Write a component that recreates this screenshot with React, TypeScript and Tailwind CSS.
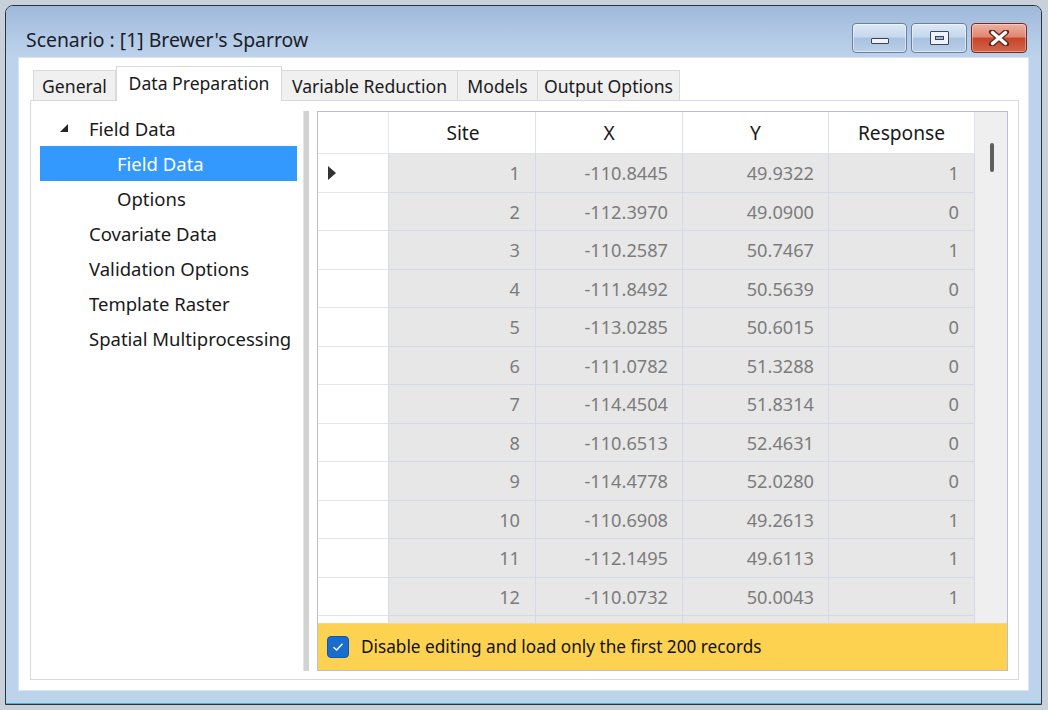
import React from "react";

const rows: [number, string, string, number][] = [
  [1, "-110.8445", "49.9322", 1],
  [2, "-112.3970", "49.0900", 0],
  [3, "-110.2587", "50.7467", 1],
  [4, "-111.8492", "50.5639", 0],
  [5, "-113.0285", "50.6015", 0],
  [6, "-111.0782", "51.3288", 0],
  [7, "-114.4504", "51.8314", 0],
  [8, "-110.6513", "52.4631", 0],
  [9, "-114.4778", "52.0280", 0],
  [10, "-110.6908", "49.2613", 1],
  [11, "-112.1495", "49.6113", 1],
  [12, "-110.0732", "50.0043", 1],
  [13, "", "", 0],
];

function TitleButtons() {
  return (
    <div className="flex gap-[4px] mt-[17px]">
      <div className="w-[55px] h-[30px] rounded-[4px] border border-[#6b80a0] bg-[linear-gradient(to_bottom,#dce8f6_0%,#c6d8ee_45%,#a9c2e0_52%,#b9cfe8_100%)] flex items-end justify-center pb-[8px] shadow-[inset_0_0_0_1px_rgba(255,255,255,0.5)]">
        <div className="w-[18px] h-[6px] rounded-[1px] border border-[#3b4757] bg-[#eef3f9]" />
      </div>
      <div className="w-[56px] h-[30px] rounded-[4px] border border-[#6b80a0] bg-[linear-gradient(to_bottom,#dce8f6_0%,#c6d8ee_45%,#a9c2e0_52%,#b9cfe8_100%)] flex items-center justify-center shadow-[inset_0_0_0_1px_rgba(255,255,255,0.5)]">
        <div className="w-[19px] h-[14px] rounded-[1px] border border-[#3b4757] bg-[#eef3f9] flex items-center justify-center">
          <div className="w-[9px] h-[4px] border border-[#3b4757] bg-[#9fb6d3]" />
        </div>
      </div>
      <div className="w-[56px] h-[30px] rounded-[4px] border border-[#7a2a20] bg-[linear-gradient(to_bottom,#eeb1a3_0%,#e0876f_45%,#c7452b_52%,#d4664a_100%)] flex items-center justify-center shadow-[inset_0_0_0_1px_rgba(255,255,255,0.35)]">
        <svg width="22" height="16" viewBox="0 0 22 16">
          <path d="M4 2 L18 14 M18 2 L4 14" stroke="#5a2a22" strokeWidth="6" strokeLinecap="round" />
          <path d="M4.5 2.5 L17.5 13.5 M17.5 2.5 L4.5 13.5" stroke="#ffffff" strokeWidth="3.4" strokeLinecap="round" />
        </svg>
      </div>
    </div>
  );
}

function Tabs() {
  return (
    <div className="h-[34px] shrink-0 flex items-end ml-[3px] text-[17.6px]">
      <div className="w-[83px] h-[30px] bg-[#f0f0f0] border border-b-0 border-[#d9d9d9] flex items-center justify-center text-[#1a1a1a]">
        General
      </div>
      <div className="relative z-10 w-[166px] h-[35px] -mb-px bg-white border border-b-0 border-[#d9d9d9] flex items-center justify-center pb-[3px] text-[#1a1a1a]">
        Data Preparation
      </div>
      <div className="w-[176px] h-[30px] bg-[#f0f0f0] border border-b-0 border-l-0 border-[#d9d9d9] flex items-center justify-center text-[#1a1a1a]">
        Variable Reduction
      </div>
      <div className="w-[80px] h-[30px] bg-[#f0f0f0] border border-b-0 border-l-0 border-[#d9d9d9] flex items-center justify-center text-[#1a1a1a]">
        Models
      </div>
      <div className="w-[142px] h-[30px] bg-[#f0f0f0] border border-b-0 border-l-0 border-[#d9d9d9] flex items-center justify-center text-[#1a1a1a]">
        Output Options
      </div>
    </div>
  );
}

function Tree() {
  return (
    <div className="w-[264px] shrink-0 pl-[1px] pr-[6px] flex flex-col text-[#1a1a1a] text-[18.5px]">
      <div className="h-[35px] flex items-center">
        <div className="w-[20px]" />
        <svg width="8" height="8" viewBox="0 0 8 8" className="mt-[-1px]">
          <polygon points="8,0 8,8 0,8" fill="#262626" />
        </svg>
        <span className="ml-[21px]">Field Data</span>
      </div>
      <div className="h-[35px] flex items-center bg-[#3399ff] text-white pl-[77px]">Field Data</div>
      <div className="h-[35px] flex items-center pl-[77px]">Options</div>
      <div className="h-[35px] flex items-center pl-[49px]">Covariate Data</div>
      <div className="h-[35px] flex items-center pl-[49px]">Validation Options</div>
      <div className="h-[35px] flex items-center pl-[49px]">Template Raster</div>
      <div className="h-[35px] flex items-center pl-[49px]">Spatial Multiprocessing</div>
    </div>
  );
}

function Grid() {
  return (
    <div className="flex-1 flex flex-col border border-[#bcbcd6] bg-white min-w-0 min-h-0">
      <div className="flex-1 flex overflow-hidden min-h-0">
        <div className="w-[657px] shrink-0 flex flex-col">
          <div className="h-[42px] flex shrink-0 text-[#1a1a1a] text-[19.2px]">
            <div className="w-[71px] border-r border-b border-[#e2e6ee]" />
            <div className="w-[147px] border-r border-b border-[#dde2ec] flex items-center justify-center pl-[2px]">Site</div>
            <div className="w-[147px] border-r border-b border-[#dde2ec] flex items-center justify-center">X</div>
            <div className="w-[146px] border-r border-b border-[#dde2ec] flex items-center justify-center">Y</div>
            <div className="w-[146px] border-r border-b border-[#dde2ec] flex items-center justify-center">Response</div>
          </div>
          {rows.map((r, i) => (
            <div key={i} className={`flex shrink-0 text-[18.2px] ${i % 2 === 0 ? "h-[39px]" : "h-[38px]"}`}>
              <div className="w-[71px] bg-white border-r border-r-[#d5dbe8] border-b border-b-[#e4e4e4] flex items-center pl-[10px]">
                {i === 0 && (
                  <svg width="8" height="14" viewBox="0 0 8 14">
                    <polygon points="0,0 8,7 0,14" fill="#333333" />
                  </svg>
                )}
              </div>
              <div className="w-[147px] bg-[#e7e7e7] border-r border-b border-[#d3d9e6] flex items-center justify-end pr-[15px] text-[#7c7c7c]">
                {r[1] ? r[0] : ""}
              </div>
              <div className="w-[147px] bg-[#e7e7e7] border-r border-b border-[#d3d9e6] flex items-center justify-end pr-[14px] text-[#7c7c7c]">
                {r[1]}
              </div>
              <div className="w-[146px] bg-[#e7e7e7] border-r border-b border-[#d3d9e6] flex items-center justify-end pr-[14px] text-[#7c7c7c]">
                {r[2]}
              </div>
              <div className="w-[146px] bg-[#e7e7e7] border-r border-b border-[#d3d9e6] flex items-center justify-end pr-[15px] text-[#7c7c7c]">
                {r[1] ? r[3] : ""}
              </div>
            </div>
          ))}
        </div>
        <div className="flex-1 bg-[#efefef] flex justify-center pt-[31px] pl-[1px]">
          <div className="w-[4px] h-[29px] rounded-[2px] bg-[#5f5f5f]" />
        </div>
      </div>
      <div className="h-[47px] shrink-0 bg-[#fdd250] border-t border-[#e9d9a6] flex items-center pl-[9px] text-[#111111] text-[17.2px]">
        <div className="w-[22px] h-[22px] rounded-[4px] bg-[#1a6dd0] border border-[#0f58b0] flex items-center justify-center">
          <svg width="12" height="10" viewBox="0 0 12 10">
            <path d="M1.5 5.2 L4.6 8 L10.5 1.8" stroke="white" strokeWidth="1.4" fill="none" />
          </svg>
        </div>
        <span className="ml-[12px]">Disable editing and load only the first 200 records</span>
      </div>
    </div>
  );
}

export default function App() {
  return (
    <div className="w-[1048px] h-[710px] bg-[#c8d0da] pt-[5px] pl-[5px] overflow-hidden font-['Segoe_UI','Noto_Sans',sans-serif] text-[17px] leading-[24px]">
      <div className="w-[1037px] h-[700px] border border-[#2b3540] rounded-t-[8px] bg-[#bdd3eb] flex flex-col overflow-hidden">
        <div className="h-[52px] shrink-0 flex justify-between pl-[20px] pr-[14px] bg-[linear-gradient(to_bottom,#9fb9d9_0%,#b3cae6_60%,#bdd3eb_100%)]">
          <div className="mt-[22px] text-[#1c1c2a] text-[19.4px]">Scenario : [1] Brewer's Sparrow</div>
          <TitleButtons />
        </div>
        <div className="flex-1 min-h-0 flex px-[13px] pb-[13px] border-b border-[#3fb6cc]">
          <div className="flex-1 min-h-0 bg-white flex flex-col pt-[8px] pl-[11px] pr-[9px] pb-[10px] shadow-[0_0_0_1px_#d6e4f3]">
            <Tabs />
            <div className="flex-1 border border-[#d9d9d9] bg-white flex pt-[10px] pb-[8px] pl-[8px] pr-[10px] min-h-0">
              <Tree />
              <div className="w-[6px] shrink-0 bg-[#d2d2d2] border-l border-[#e4e4e4]" />
              <div className="w-[8px] shrink-0" />
              <Grid />
            </div>
          </div>
        </div>
      </div>
    </div>
  );
}
